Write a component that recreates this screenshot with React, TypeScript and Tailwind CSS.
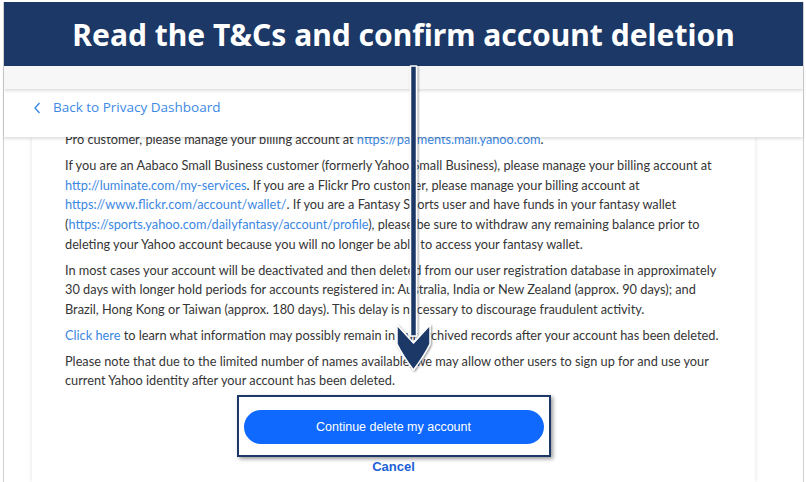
import React from "react";

const body = { fontFamily: 'Lato, "Noto Sans", sans-serif' };
const arial = { fontFamily: '"Liberation Sans", Arial, sans-serif' };

function A({ children }: { children: React.ReactNode }) {
  return <span className="text-[#3b87e2]">{children}</span>;
}

function Arrow() {
  return (
    <svg
      className="pointer-events-none absolute left-0 top-0 z-30"
      width="806"
      height="482"
      viewBox="0 0 806 482"
    >
      <defs>
        <filter id="sh" x="-50%" y="-10%" width="200%" height="120%">
          <feDropShadow dx="1" dy="1" stdDeviation="1.2" floodColor="#000" floodOpacity="0.45" />
        </filter>
      </defs>
      <g filter="url(#sh)" fill="#1b3866" stroke="#ffffff" strokeWidth="1.5" strokeLinejoin="round">
        <path d="M410.5 66 L416.5 66 L416.5 336 L410.5 336 Z" />
        <path d="M397 325 L413.5 343 L430 325 L430 344 Q424 356 413.5 370 Q403 356 397 344 Z" />
      </g>
    </svg>
  );
}

export default function App() {
  return (
    <div className="relative h-[482px] w-[806px] overflow-hidden bg-white pl-[3px] pt-[2px]">
      <div className="flex h-[480px] w-[801px] flex-col border-x border-[#cfcfcf]">
        <div
          className="flex h-[64px] shrink-0 items-center justify-center bg-[#1b3866] text-[30px] font-bold text-white"
          style={{ fontFamily: '"Noto Sans", sans-serif' }}
        >
          Read the T&amp;Cs and confirm account deletion
        </div>
        <div className="relative z-20 h-[23px] shrink-0 bg-[#f7f7f7] shadow-[0_2px_3px_rgba(0,0,0,0.13)]" />
        <div
          className="relative z-10 flex h-[48px] shrink-0 items-start bg-white pl-[29px] pt-[8px] shadow-[0_2px_3px_rgba(0,0,0,0.13)]"
          style={{ fontFamily: '"Open Sans", sans-serif' }}
        >
          <svg width="10" height="14" viewBox="0 0 10 14" className="mt-[4px]">
            <path d="M6.5 2 L2 7 L6.5 12" fill="none" stroke="#3d8ae6" strokeWidth="1.4" />
          </svg>
          <span className="ml-[10px] text-[13.5px] leading-[20px] text-[#3d8ae6]">
            Back to Privacy Dashboard
          </span>
        </div>
        <div className="flex min-h-0 flex-1">
          <div className="ml-[28px] w-[723px] bg-white shadow-[0_0_5px_rgba(0,0,0,0.12)]">
            <div
              className="-mt-[7px] whitespace-nowrap px-[33px] text-[12.75px] leading-[19.75px] text-[#353535]"
              style={body}
            >
              <p>
                Pro customer, please manage your billing account at <A>https://payments.mail.yahoo.com</A>.
              </p>
              <p className="mt-[6px]">
                If you are an Aabaco Small Business customer (formerly Yahoo Small Business), please manage your billing account at
                <br />
                <A>http://luminate.com/my-services</A>. If you are a Flickr Pro customer, please manage your billing account at
                <br />
                <A>https://www.flickr.com/account/wallet/</A>. If you are a Fantasy Sports user and have funds in your fantasy wallet
                <br />(<A>https://sports.yahoo.com/dailyfantasy/account/profile</A>), please be sure to withdraw any remaining balance prior to
                <br />
                deleting your Yahoo account because you will no longer be able to access your fantasy wallet.
              </p>
              <p className="mt-[6px]">
                In most cases your account will be deactivated and then deleted from our user registration database in approximately
                <br />
                30 days with longer hold periods for accounts registered in: Australia, India or New Zealand (approx. 90 days); and
                <br />
                Brazil, Hong Kong or Taiwan (approx. 180 days). This delay is necessary to discourage fraudulent activity.
              </p>
              <p className="mt-[6px]">
                <A>Click here</A> to learn what information may possibly remain in our archived records after your account has been deleted.
              </p>
              <p className="mt-[6px]">
                Please note that due to the limited number of names available, we may allow other users to sign up for and use your
                <br />
                current Yahoo identity after your account has been deleted.
              </p>
            </div>
            <div className="mt-[4px] flex flex-col items-center" style={arial}>
              <div className="h-[62px] w-[314px] border-2 border-[#1b3866] bg-white px-[5px] pt-[13px] shadow-[2px_2px_4px_rgba(0,0,0,0.4)]">
                <button className="flex h-[34px] w-full items-center justify-center rounded-full bg-[#0f69ff] text-[12.5px] text-white">
                  Continue delete my account
                </button>
              </div>
              <div className="mt-[2px] text-[13px] font-bold leading-[16px] text-[#1d5fd6]">Cancel</div>
            </div>
          </div>
        </div>
      </div>
      <Arrow />
    </div>
  );
}
